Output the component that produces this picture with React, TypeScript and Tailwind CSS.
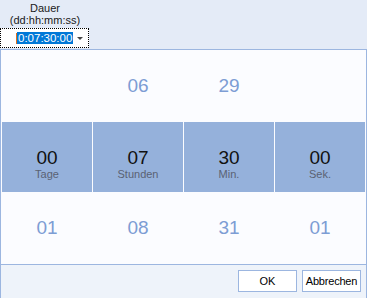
const columns = [
  { prev: '', value: '00', next: '01', label: 'Tage' },
  { prev: '06', value: '07', next: '08', label: 'Stunden' },
  { prev: '29', value: '30', next: '31', label: 'Min.' },
  { prev: '', value: '00', next: '01', label: 'Sek.' },
]

function ScrollRow({ values }: { values: string[] }) {
  return (
    <div className="flex h-[72px] gap-px px-px">
      {values.map((v, i) => (
        <div key={i} className="flex w-[90px] justify-center pt-[26px]">
          <span className="text-[19px] leading-none text-[#7d9dd4]">{v}</span>
        </div>
      ))}
    </div>
  )
}

export default function App() {
  return (
    <div
      className="h-[298px] w-[367px] overflow-hidden bg-[#e4ebf7] text-[#1a1a1a]"
      style={{ fontFamily: '"Liberation Sans", Arial, sans-serif' }}
    >
      <div className="flex w-[90px] flex-col items-center pt-[2px] text-[11px] leading-[12px]">
        <span>Dauer</span>
        <span>(dd:hh:mm:ss)</span>
      </div>

      <div className="mt-[2px] flex h-[20px] w-[89px] items-center border border-dotted border-black bg-white">
        <span className="ml-[15px] h-[11px] w-px bg-[#e0701c]" />
        <span className="bg-[#0078d7] px-px text-[11.5px] leading-[12px] text-white">0:07:30:00</span>
        <span className="ml-auto mr-[5px] h-0 w-0 border-x-[3px] border-t-[3px] border-x-transparent border-t-[#444]" />
      </div>

      <div className="mt-px flex h-[250px] w-[367px] flex-col border border-[#9cb6e0] bg-[#fbfcff]">
        <ScrollRow values={columns.map((c) => c.prev)} />

        <div className="flex h-[70px] gap-px px-px">
          {columns.map((c) => (
            <div
              key={c.label}
              className="flex w-[90px] flex-col items-center bg-[#95b1db] pt-[26px]"
            >
              <span className="text-[19px] leading-none text-[#111]">{c.value}</span>
              <span className="mt-[2px] text-[11px] leading-none text-[#5a6273]">{c.label}</span>
            </div>
          ))}
        </div>

        <ScrollRow values={columns.map((c) => c.next)} />

        <div className="flex flex-1 justify-end gap-[5px] border-t border-[#9cb6e0] bg-[#eef3fa] pr-[5px] pt-[5px]">
          <button
            type="button"
            className="h-[22px] w-[59px] border border-[#9cb6e0] bg-white text-[11px] text-black"
          >
            OK
          </button>
          <button
            type="button"
            className="h-[22px] w-[59px] border border-[#9cb6e0] bg-white text-[11px] tracking-[-0.2px] text-black"
          >
            Abbrechen
          </button>
        </div>
      </div>
    </div>
  )
}
